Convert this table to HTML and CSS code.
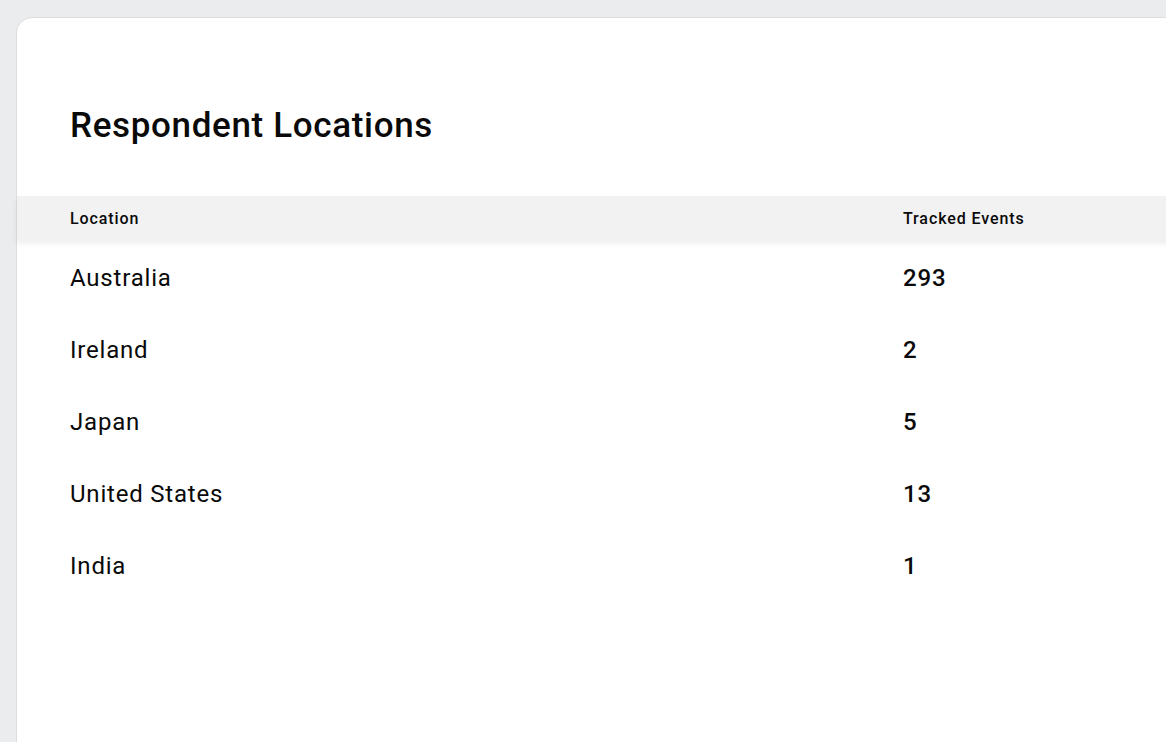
FILE: index.html
```html
<!DOCTYPE html>
<html lang="en">
<head>
    <meta charset="UTF-8">
    <meta name="viewport" content="width=device-width, initial-scale=1.0">
    <title>Respondent Locations</title>
    <link rel="stylesheet" href="styles.css">
</head>
<body>

    <div class="card">
        <h2 class="card-title">Respondent Locations</h2>

        <div class="table">
            <div class="table-row table-head">
                <div class="cell">Location</div>
                <div class="cell">Tracked Events</div>
            </div>
            <div class="table-row">
                <div class="cell">Australia</div>
                <div class="cell num">293</div>
            </div>
            <div class="table-row">
                <div class="cell">Ireland</div>
                <div class="cell num">2</div>
            </div>
            <div class="table-row">
                <div class="cell">Japan</div>
                <div class="cell num">5</div>
            </div>
            <div class="table-row">
                <div class="cell">United States</div>
                <div class="cell num">13</div>
            </div>
            <div class="table-row">
                <div class="cell">India</div>
                <div class="cell num">1</div>
            </div>
        </div>
    </div>

</body>
</html>
```

FILE: styles.css
```css
html, body {
    margin: 0;
    height: 100%;
    overflow: hidden;
}

body {
    font-family: Roboto, 'Liberation Sans', sans-serif;
    background-color: #ebeced;
    color: #0a0a0a;
    padding: 17px 0 0 16px;
    box-sizing: border-box;
}

.card {
    width: 1300px;
    height: 900px;
    background-color: #fff;
    border: 1px solid #dcdddf;
    border-radius: 16px;
}

.card-title {
    margin: 0;
    padding: 86px 0 48px 53px;
    font-size: 35px;
    line-height: 44px;
    font-weight: 500;
    letter-spacing: 0.65px;
}

.table-row {
    display: grid;
    grid-template-columns: 833px 1fr;
    height: 72px;
    padding-top: 3px;
    box-sizing: border-box;
    align-items: center;
    font-size: 24px;
    letter-spacing: 0.8px;
}

.cell {
    padding-left: 53px;
}

.num {
    font-weight: 500;
}

.table-head {
    height: 44px;
    padding-top: 0;
    font-size: 16px;
    font-weight: 500;
    letter-spacing: 0.9px;
    background-color: #f2f2f2;
    box-shadow: 0 3px 6px rgba(0, 0, 0, 0.08);
    position: relative;
}
```
